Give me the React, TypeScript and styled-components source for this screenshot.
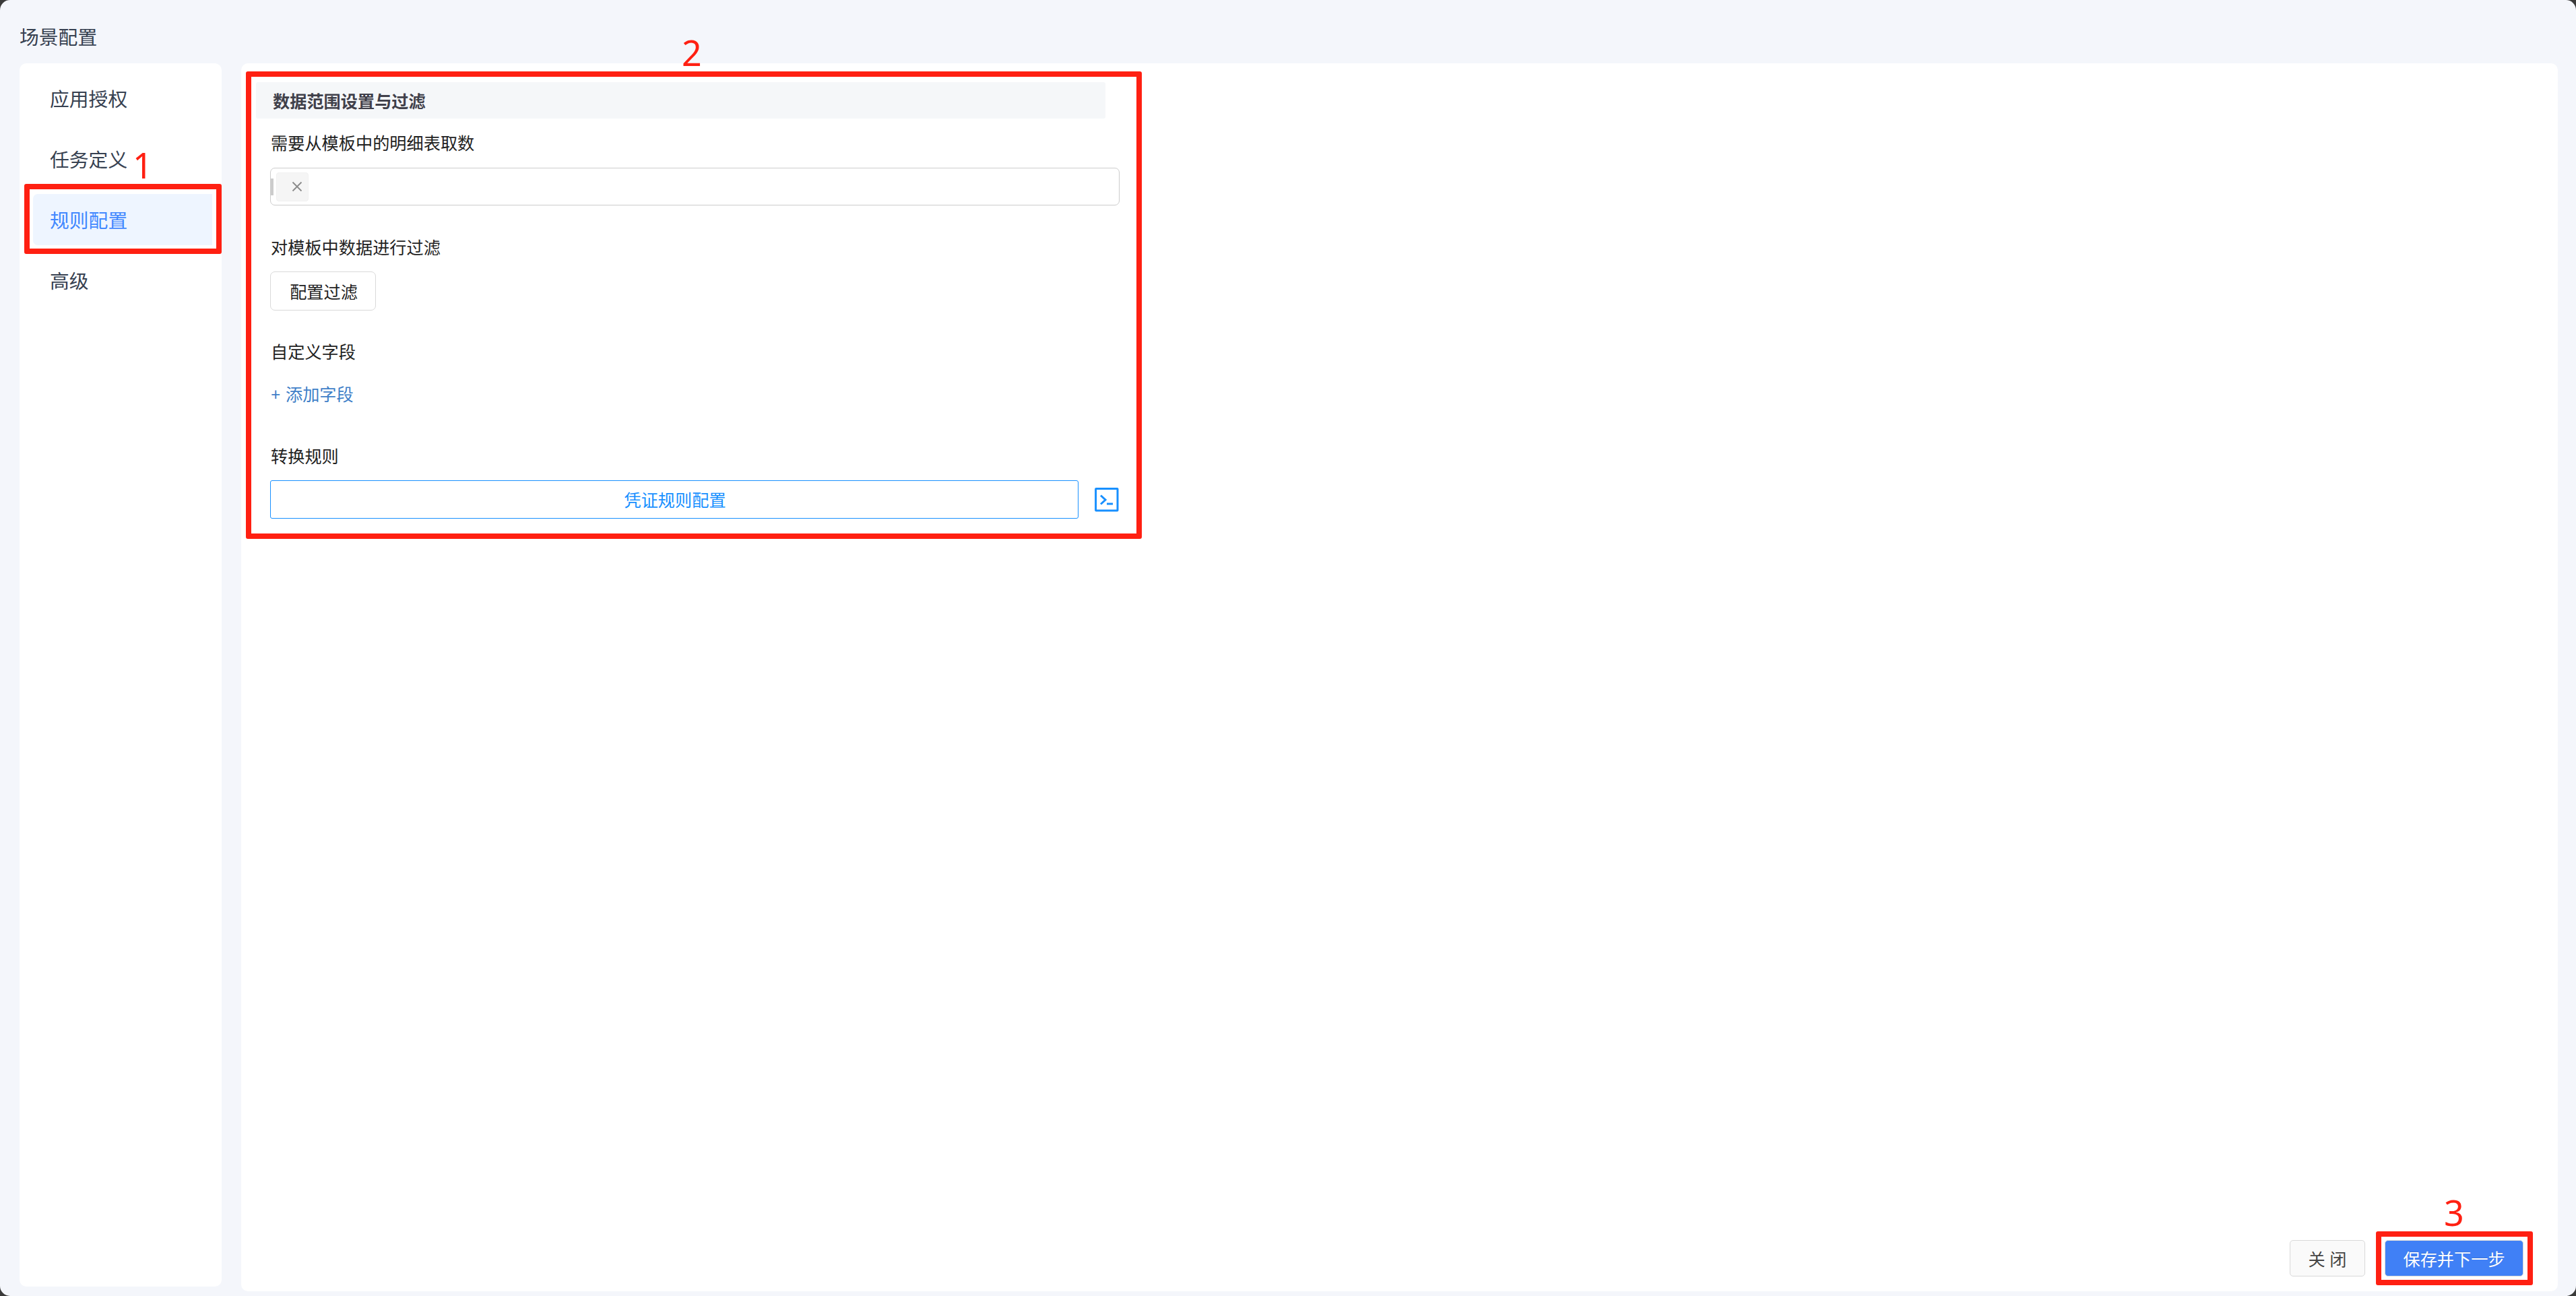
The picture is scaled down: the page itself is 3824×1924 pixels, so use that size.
import React, { useState } from 'react';
import styled, { createGlobalStyle } from 'styled-components';

const GlobalStyle = createGlobalStyle`
  * {
    box-sizing: border-box;
  }
  body {
    margin: 0;
    background: #3a3a3a;
    font-family: "Noto Sans", "Noto Sans CJK SC", sans-serif;
  }
  button {
    font-family: inherit;
  }
`

const Dialog = styled.div`
  position: relative;
  display: flex;
  flex-direction: column;
  height: 1924px;
  padding: 0 27px 0 29px;
  overflow: hidden;
  border-radius: 15px;
  background: #f4f6fb;
`

const DialogTitle = styled.div`
  height: 94px;
  padding-top: 15px;
  line-height: 80px;
  font-size: 28.8px;
  color: #374151;
`

const DialogBody = styled.div`
  display: flex;
  flex-grow: 1;
  gap: 29px;
`

const Sidebar = styled.div`
  display: flex;
  flex-direction: column;
  gap: 14px;
  width: 300px;
  height: 1816px;
  padding: 14px 14px 14px 20px;
  border-radius: 10px;
  background: #fff;
`

const MenuItem = styled.div<{ $active: boolean }>`
  height: 76px;
  padding-left: 25px;
  line-height: 78px;
  border-radius: 7px 0 0 7px;
  font-size: 28.8px;
  color: ${props => props.$active ? '#4288ff' : '#374151'};
  background: ${props => props.$active ? '#eef5ff' : 'transparent'};
  cursor: pointer;
`

const Content = styled.div`
  display: flex;
  flex-direction: column;
  flex-grow: 1;
  height: 1823px;
  padding: 28px 51px 22px 22px;
  border-radius: 10px;
  background: #fff;
`

const SectionHeader = styled.div`
  width: 1261px;
  height: 54px;
  padding-left: 25px;
  line-height: 57px;
  border-radius: 3px;
  font-size: 25.2px;
  font-weight: bold;
  color: #40404a;
  background: #f5f7f9;
`

const FormArea = styled.div`
  display: flex;
  flex-direction: column;
  flex-grow: 1;
  width: 1282px;
  padding: 8px 0 0 21px;
`

const FormItem = styled.div`
  height: 155px;
`

const Label = styled.div`
  height: 56px;
  margin-bottom: 8px;
  padding-left: 1px;
  line-height: 56px;
  font-size: 25.2px;
  color: #222;
`

const SelectBox = styled.div`
  display: flex;
  align-items: center;
  gap: 4px;
  height: 56px;
  margin-top: 9px;
  border: 1px solid #ccc;
  border-radius: 7px;
`

const Cursor = styled.span`
  width: 5px;
  height: 25px;
  margin-left: -1px;
  background: #ccc;
`

const Tag = styled.span`
  display: flex;
  align-items: center;
  justify-content: flex-end;
  width: 48px;
  height: 43px;
  padding-right: 8px;
  border: 1px solid #f0f0f0;
  border-radius: 4px;
  background: #f5f5f5;
`

const FilterButton = styled.button`
  width: 157px;
  height: 58px;
  padding: 0 0 1px 2px;
  border: 1px solid #d9d9d9;
  border-radius: 7px;
  font-size: 25.2px;
  color: #222;
  background: #fff;
`

const AddLink = styled.a`
  display: block;
  padding-left: 1px;
  line-height: 54px;
  font-size: 25.2px;
  word-spacing: 1px;
  color: #407fc8;
`

const RuleRow = styled.div`
  display: flex;
  align-items: center;
  justify-content: space-between;
`

const RuleButton = styled.button`
  width: 1200px;
  height: 57px;
  padding: 0 0 1px 2px;
  border: 1px solid #1890ff;
  border-radius: 3px;
  font-size: 25.2px;
  color: #1890ff;
  background: #fff;
`

const Footer = styled.div`
  display: flex;
  justify-content: flex-end;
  gap: 29px;
`

const FooterButton = styled.button<{ $primary?: boolean }>`
  width: ${props => props.$primary ? 206 : 112}px;
  height: 54px;
  padding: 0;
  border: 1px solid #d9d9d9;
  border-radius: 5px;
  font-size: 25.2px;
  color: ${props => props.$primary ? '#fff' : '#444'};
  background: ${props => props.$primary ? '#4080f6' : '#fafafa'};
  text-shadow: ${props => props.$primary ? '0 -1px 0 rgba(0, 0, 0, 0.12)' : 'none'};
`

// step marks drawn over the dialog
const StepFrame = styled.div<{ $x: number; $y: number; $w: number; $h: number }>`
  position: absolute;
  left: ${props => props.$x}px;
  top: ${props => props.$y}px;
  width: ${props => props.$w}px;
  height: ${props => props.$h}px;
  border: 8px solid #ff2012;
  border-radius: 3px;
  pointer-events: none;
`

const StepNumber = styled.div<{ $x: number; $y: number }>`
  position: absolute;
  left: ${props => props.$x}px;
  top: ${props => props.$y}px;
  line-height: 52px;
  font-size: 52px;
  color: #ff2012;
`

const menus = ['应用授权', '任务定义', '规则配置', '高级'];

const CloseIcon = () => (
  <svg width="16" height="16" viewBox="0 0 16 16" fill="none" stroke="#8a8a8a" strokeWidth="1.8">
    <path d="M1.5 1.5L14.5 14.5M14.5 1.5L1.5 14.5" />
  </svg>
)

const CodeIcon = () => (
  <svg width="37" height="36" viewBox="0 0 37 36" fill="none" stroke="#1890ff" strokeWidth="3">
    <rect x="1.6" y="1.6" width="32.4" height="32.4" rx="0.5" />
    <path d="M9 11.5L16 18L9 24.5M18 24H27" />
  </svg>
)

const App = () => {

  const [current, setCurrent] = useState('规则配置');

  return <>
    <GlobalStyle />
    <Dialog>
      <DialogTitle>场景配置</DialogTitle>
      <DialogBody>
        <Sidebar>
          {menus.map(name => (
            <MenuItem key={name} $active={name === current} onClick={() => setCurrent(name)}>
              {name}
            </MenuItem>
          ))}
        </Sidebar>
        <Content>
          <SectionHeader>数据范围设置与过滤</SectionHeader>
          <FormArea>
            <FormItem>
              <Label>需要从模板中的明细表取数</Label>
              <SelectBox>
                <Cursor />
                <Tag><CloseIcon /></Tag>
              </SelectBox>
            </FormItem>
            <FormItem>
              <Label>对模板中数据进行过滤</Label>
              <FilterButton>配置过滤</FilterButton>
            </FormItem>
            <FormItem>
              <Label>自定义字段</Label>
              <AddLink>+ 添加字段</AddLink>
            </FormItem>
            <FormItem>
              <Label>转换规则</Label>
              <RuleRow>
                <RuleButton>凭证规则配置</RuleButton>
                <CodeIcon />
              </RuleRow>
            </FormItem>
          </FormArea>
          <Footer>
            <FooterButton>关 闭</FooterButton>
            <FooterButton $primary>保存并下一步</FooterButton>
          </Footer>
        </Content>
      </DialogBody>
      <StepFrame $x={36} $y={273} $w={293} $h={104} />
      <StepNumber $x={197} $y={219}>1</StepNumber>
      <StepFrame $x={365} $y={106} $w={1330} $h={694} />
      <StepNumber $x={1012} $y={52}>2</StepNumber>
      <StepFrame $x={3527} $y={1828} $w={233} $h={80} />
      <StepNumber $x={3628} $y={1774}>3</StepNumber>
    </Dialog>
  </>
}

export default App;
